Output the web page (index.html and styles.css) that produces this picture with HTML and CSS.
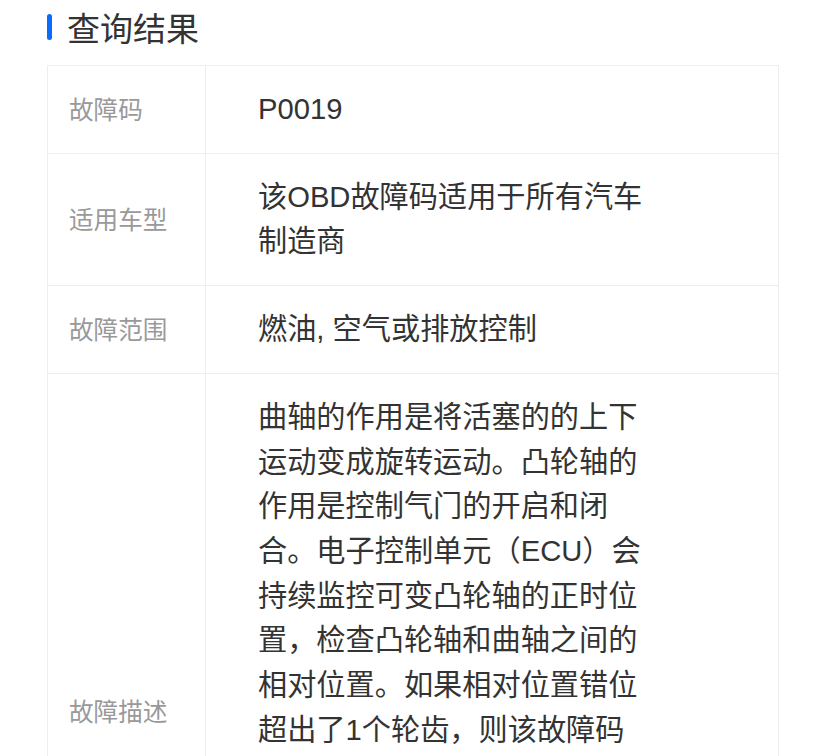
FILE: index.html
```html
<!DOCTYPE html>
<html lang="zh-CN">
<head>
    <meta charset="UTF-8">
    <meta name="viewport" content="width=device-width, initial-scale=1.0">
    <title>查询结果</title>
    <link rel="stylesheet" href="styles.css">
</head>
<body>
    <main class="page">
        <h2 class="title">查询结果</h2>
        <table class="result">
            <tr>
                <td class="label">故障码</td>
                <td class="value"><div class="text">P0019</div></td>
            </tr>
            <tr>
                <td class="label">适用车型</td>
                <td class="value"><div class="text">该OBD故障码适用于所有汽车制造商</div></td>
            </tr>
            <tr>
                <td class="label">故障范围</td>
                <td class="value"><div class="text">燃油, 空气或排放控制</div></td>
            </tr>
            <tr>
                <td class="label">故障描述</td>
                <td class="value last"><div class="text">曲轴的作用是将活塞的的上下运动变成旋转运动。凸轮轴的作用是控制气门的开启和闭合。电子控制单元（ECU）会持续监控可变凸轮轴的正时位置，检查凸轮轴和曲轴之间的相对位置。如果相对位置错位超出了1个轮齿，则该故障码将被存储，同时点亮发动机故障灯。常见原因包括正时皮带或正时链条跳齿、张紧器失效、可变正时控制电磁阀卡滞、凸轮轴位置传感器故障，以及相关线路短路或断路。</div></td>
            </tr>
        </table>
    </main>
</body>
</html>
```

FILE: styles.css
```css
body {
    margin: 0;
    padding: 0;
    background: #fff;
    font-family: "Liberation Sans", "Noto Sans CJK SC", sans-serif;
    color: #333;
}
.page {
    padding: 7px 50px 0 47px;
}
.title {
    display: flex;
    align-items: center;
    margin: 0 0 18px;
    height: 40px;
    font-size: 33px;
    font-weight: normal;
    color: #333;
}
.title::before {
    content: "";
    width: 5px;
    height: 26px;
    margin-right: 15px;
    border-radius: 3px;
    background: #0a6cff;
}
.result {
    width: 732px;
    border-collapse: collapse;
    border: 1px solid #eee;
}
.result td {
    border: 1px solid #eee;
    vertical-align: middle;
}
.label {
    width: 136px;
    padding: 0 0 3px 21px;
    font-family: "Noto Sans CJK SC", sans-serif;
    font-size: 24.6px;
    line-height: 36px;
    color: #999;
}
.value {
    padding: 21px 0 21px 52px;
}
.value.last {
    padding-bottom: 28px;
}
.text {
    max-width: 390px;
    font-size: 29.2px;
    line-height: 44.7px;
    color: #333;
}
```
